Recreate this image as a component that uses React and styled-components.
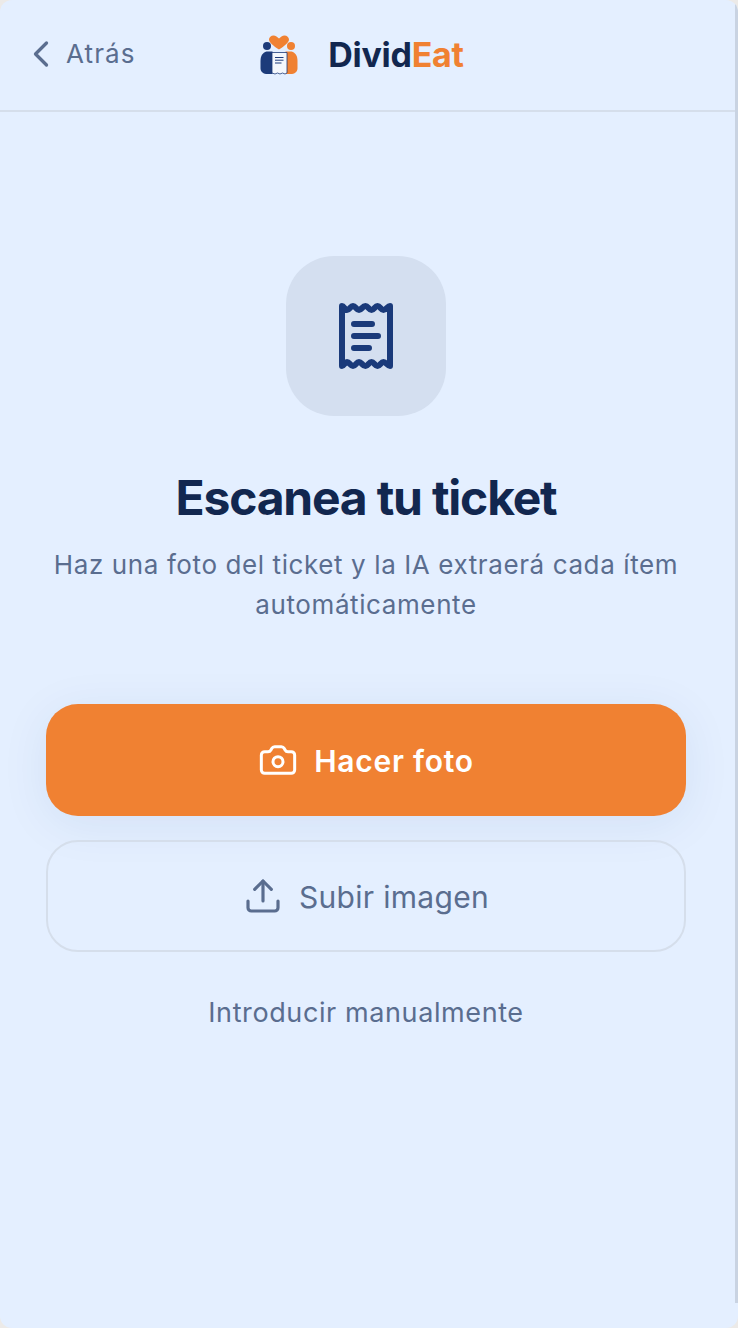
import React from "react";
import styled, { createGlobalStyle } from "styled-components";
import { ChevronLeft, Camera, Upload } from "lucide-react";

const Global = createGlobalStyle`
  html, body { margin: 0; padding: 0; background: #eceae8; }
  * { box-sizing: border-box; }
  body { font-family: Inter, "Liberation Sans", sans-serif; }
`;

const Screen = styled.div`
  position: relative;
  width: 738px;
  height: 1328px;
  overflow: hidden;
  border-radius: 12px;
  background: #e4efff;
  display: flex;
  flex-direction: column;
`;

const ScrollEdge = styled.div`
  position: absolute;
  top: 4px;
  right: 0;
  width: 3px;
  height: 1299px;
  background: #c9d3e2;
`;

const Header = styled.header`
  position: relative;
  height: 112px;
  flex: none;
  display: flex;
  align-items: center;
  justify-content: center;
  padding-right: 6px;
  border-bottom: 2px solid #d5deeb;
`;

const BackLink = styled.button`
  position: absolute;
  left: 19px;
  top: 32px;
  display: flex;
  align-items: center;
  gap: 3px;
  padding: 0;
  border: 0;
  background: none;
  color: #5a6d8f;
  font: 400 26px/44px Inter, sans-serif;
  letter-spacing: 1.1px;
`;

const Brand = styled.div`
  display: flex;
  align-items: center;
  gap: 30px;
  margin-right: 10px;
`;

const BrandName = styled.div`
  font-size: 34px;
  line-height: 40px;
  font-weight: 700;
  letter-spacing: -0.3px;
  color: #12274f;
`;

const BrandAccent = styled.span`
  color: #f08132;
`;

const Main = styled.main`
  flex: 1;
  display: flex;
  flex-direction: column;
  align-items: center;
  padding: 144px 52px 0 46px;
`;

const IconTile = styled.div`
  width: 160px;
  height: 160px;
  border-radius: 48px;
  background: #d4dff0;
  display: flex;
  align-items: center;
  justify-content: center;
`;

const Title = styled.h1`
  margin: 53px 0 0;
  font-size: 48px;
  line-height: 58px;
  font-weight: 700;
  letter-spacing: -1.2px;
  color: #12274f;
  text-align: center;
`;

const Subtitle = styled.p`
  margin: 18px 0 0;
  width: 640px;
  font-size: 26px;
  line-height: 40px;
  font-weight: 400;
  letter-spacing: 0.6px;
  color: #5a6d8f;
  text-align: center;
`;

const Actions = styled.div`
  width: 100%;
  margin-top: 79px;
  display: flex;
  flex-direction: column;
  gap: 24px;
`;

const ActionButton = styled.button`
  height: 112px;
  width: 100%;
  border-radius: 32px;
  display: flex;
  align-items: center;
  justify-content: center;
  font-family: Inter, sans-serif;
  font-size: 30px;
  padding: 0;
  gap: 16px;
  letter-spacing: ${(p) => (p.$primary ? "0.75px" : "0.3px")};
  font-weight: ${(p) => (p.$primary ? 600 : 400)};
  color: ${(p) => (p.$primary ? "#ffffff" : "#5a6d8f")};
  background: ${(p) => (p.$primary ? "#f08132" : "transparent")};
  border: ${(p) => (p.$primary ? "0" : "2px solid #d5deeb")};
  box-shadow: ${(p) => (p.$primary ? "0 8px 48px rgba(26, 58, 122, 0.08)" : "none")};
`;

const ButtonLabel = styled.span`
  padding-top: 2px;
`;

const ManualLink = styled.button`
  margin-top: 41px;
  border: 0;
  padding: 0;
  background: none;
  font: 400 27px/40px Inter, sans-serif;
  letter-spacing: 0.6px;
  color: #5a6d8f;
`;

const Logo = () => (
  <svg width="40" height="40" viewBox="-1.500 0 40 40" aria-hidden="true">
    <path d="M19.500 14.500 C14 11 9.500 7.500 9.500 4.500 C9.500 1 14 -1 17 1.500 L19.500 3.500 L22 1.500 C25 -1 29.500 1 29.500 4.500 C29.500 7.500 25 11 19.500 14.500Z" fill="#f08132" />
    <circle cx="7.500" cy="11" r="4" fill="#1d3b7a" />
    <circle cx="31.500" cy="11" r="4" fill="#f08132" />
    <path d="M13 16.500 H7 C3 17.500 1 21 1 26 V33 C1 37 4 39 8 39 H13Z" fill="#1d3b7a" />
    <path d="M26 16.500 H32 C36 17.500 38 21 38 26 V33 C38 37 35 39 31 39 H26Z" fill="#f08132" />
    <path d="M12.500 17.500 H27.500 V38 L25.500 39 L23 38 L20.500 39 L18 38 L15.500 39 L12.500 38Z" fill="#f4f7fc" stroke="#1d3b7a" strokeWidth="0.8" />
    <path d="M15.500 22.500 H24 M15.500 25.200 H24 M15.500 28 H22" stroke="#1d3b7a" strokeWidth="1" />
  </svg>
);

const ReceiptIcon = () => (
  <svg width="54" height="66" viewBox="0 0 54 66" fill="none" stroke="#1a3a7a" strokeWidth="6" strokeLinecap="round" strokeLinejoin="round" aria-hidden="true">
    <path d="M3 3 C5 3 6 7 8 7 C10.500 7 11.500 3 14 3 C16.500 3 17.500 7 20 7 C22.500 7 23.500 3 26.500 3 C29 3 30 7 32.500 7 C35 7 36 3 38.500 3 C41 3 42 7 44.500 7 C47 7 48.500 3 51 3 V63 C48.500 63 47 59 44.500 59 C42 59 41 63 38.500 63 C36 63 35 59 32.500 59 C30 59 29 63 26.500 63 C23.500 63 22.500 59 20 59 C17.500 59 16.500 63 14 63 C11.500 63 10.500 59 8 59 C6 59 5 63 3 63 Z" />
    <path d="M15 21 H33 M15 33 H39 M15 45 H30" />
  </svg>
);

export default function App() {
  return (
    <>
      <Global />
      <Screen>
        <Header>
          <BackLink>
            <ChevronLeft size={44} strokeWidth={1.8} />
            Atrás
          </BackLink>
          <Brand>
            <Logo />
            <BrandName>
              Divid<BrandAccent>Eat</BrandAccent>
            </BrandName>
          </Brand>
        </Header>
        <Main>
          <IconTile>
            <ReceiptIcon />
          </IconTile>
          <Title>Escanea tu ticket</Title>
          <Subtitle>Haz una foto del ticket y la IA extraerá cada ítem automáticamente</Subtitle>
          <Actions>
            <ActionButton $primary>
              <Camera size={40} strokeWidth={1.8} />
              <ButtonLabel>Hacer foto</ButtonLabel>
            </ActionButton>
            <ActionButton>
              <Upload size={40} strokeWidth={1.9} />
              <ButtonLabel>Subir imagen</ButtonLabel>
            </ActionButton>
          </Actions>
          <ManualLink>Introducir manualmente</ManualLink>
        </Main>
        <ScrollEdge />
      </Screen>
    </>
  );
}
